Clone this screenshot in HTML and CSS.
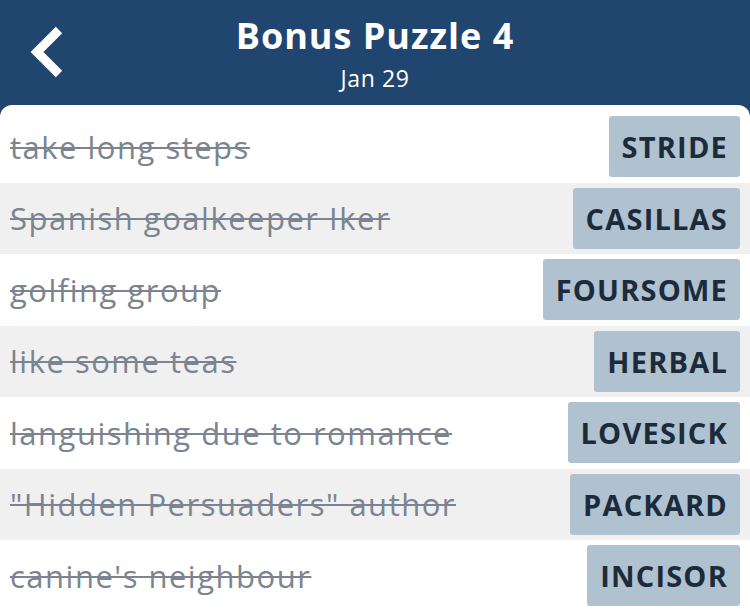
FILE: index.html
```html
<!DOCTYPE html>
<html lang="en">

<head>
    <meta charset="UTF-8">
    <meta name="viewport" content="width=device-width, initial-scale=1.0">
    <title>Bonus Puzzle 4</title>
    <link rel="stylesheet" href="styles.css">
</head>

<body>

    <div class="header">
        <a class="back" href="#">
            <svg width="40" height="56" viewBox="0 0 40 56">
                <polyline points="30,5 8,27 30,49" fill="none" stroke="#fff" stroke-width="9" />
            </svg>
        </a>
        <h1 class="title">Bonus Puzzle 4</h1>
        <p class="date">Jan 29</p>
    </div>

    <div class="card">
        <div class="row">
            <span class="clue">take long steps</span>
            <span class="answer">STRIDE</span>
        </div>
        <div class="row">
            <span class="clue">Spanish goalkeeper Iker</span>
            <span class="answer">CASILLAS</span>
        </div>
        <div class="row">
            <span class="clue">golfing group</span>
            <span class="answer">FOURSOME</span>
        </div>
        <div class="row">
            <span class="clue">like some teas</span>
            <span class="answer">HERBAL</span>
        </div>
        <div class="row">
            <span class="clue">languishing due to romance</span>
            <span class="answer">LOVESICK</span>
        </div>
        <div class="row">
            <span class="clue">"Hidden Persuaders" author</span>
            <span class="answer">PACKARD</span>
        </div>
        <div class="row">
            <span class="clue">canine's neighbour</span>
            <span class="answer">INCISOR</span>
        </div>
    </div>

</body>

</html>
```

FILE: styles.css
```css
* {
    box-sizing: border-box;
    margin: 0;
    padding: 0;
}

body {
    background-color: #20466f;
    font-family: 'Open Sans', sans-serif;
    height: 611px;
    overflow: hidden;
}

.header {
    position: relative;
    height: 105px;
    color: white;
    text-align: center;
    padding-top: 13px;
}

.back {
    position: absolute;
    left: 29px;
    top: 25px;
    display: block;
}

.title {
    font-size: 36px;
    font-weight: 700;
    line-height: 46px;
    letter-spacing: 1px;
}

.date {
    font-size: 23px;
    line-height: 30px;
    margin-top: 4px;
    letter-spacing: 0.6px;
}

.card {
    background-color: white;
    border-radius: 12px 12px 0 0;
    padding-top: 6px;
    height: 506px;
}

.row {
    display: flex;
    align-items: center;
    justify-content: space-between;
    height: 71.5px;
    padding: 0 10px;
}

.row:nth-child(even) {
    background-color: #f0f0f0;
}

.clue {
    font-size: 31px;
    letter-spacing: 1.5px;
    color: #7b8490;
    text-decoration: line-through;
    text-decoration-thickness: 2px;
    white-space: nowrap;
}

.answer {
    background-color: #b0c1cf;
    color: #1c2b3b;
    font-size: 29px;
    font-weight: 700;
    letter-spacing: 1.2px;
    line-height: 61px;
    height: 61px;
    padding: 0 12px 0 13px;
    border-radius: 3px;
}
```
